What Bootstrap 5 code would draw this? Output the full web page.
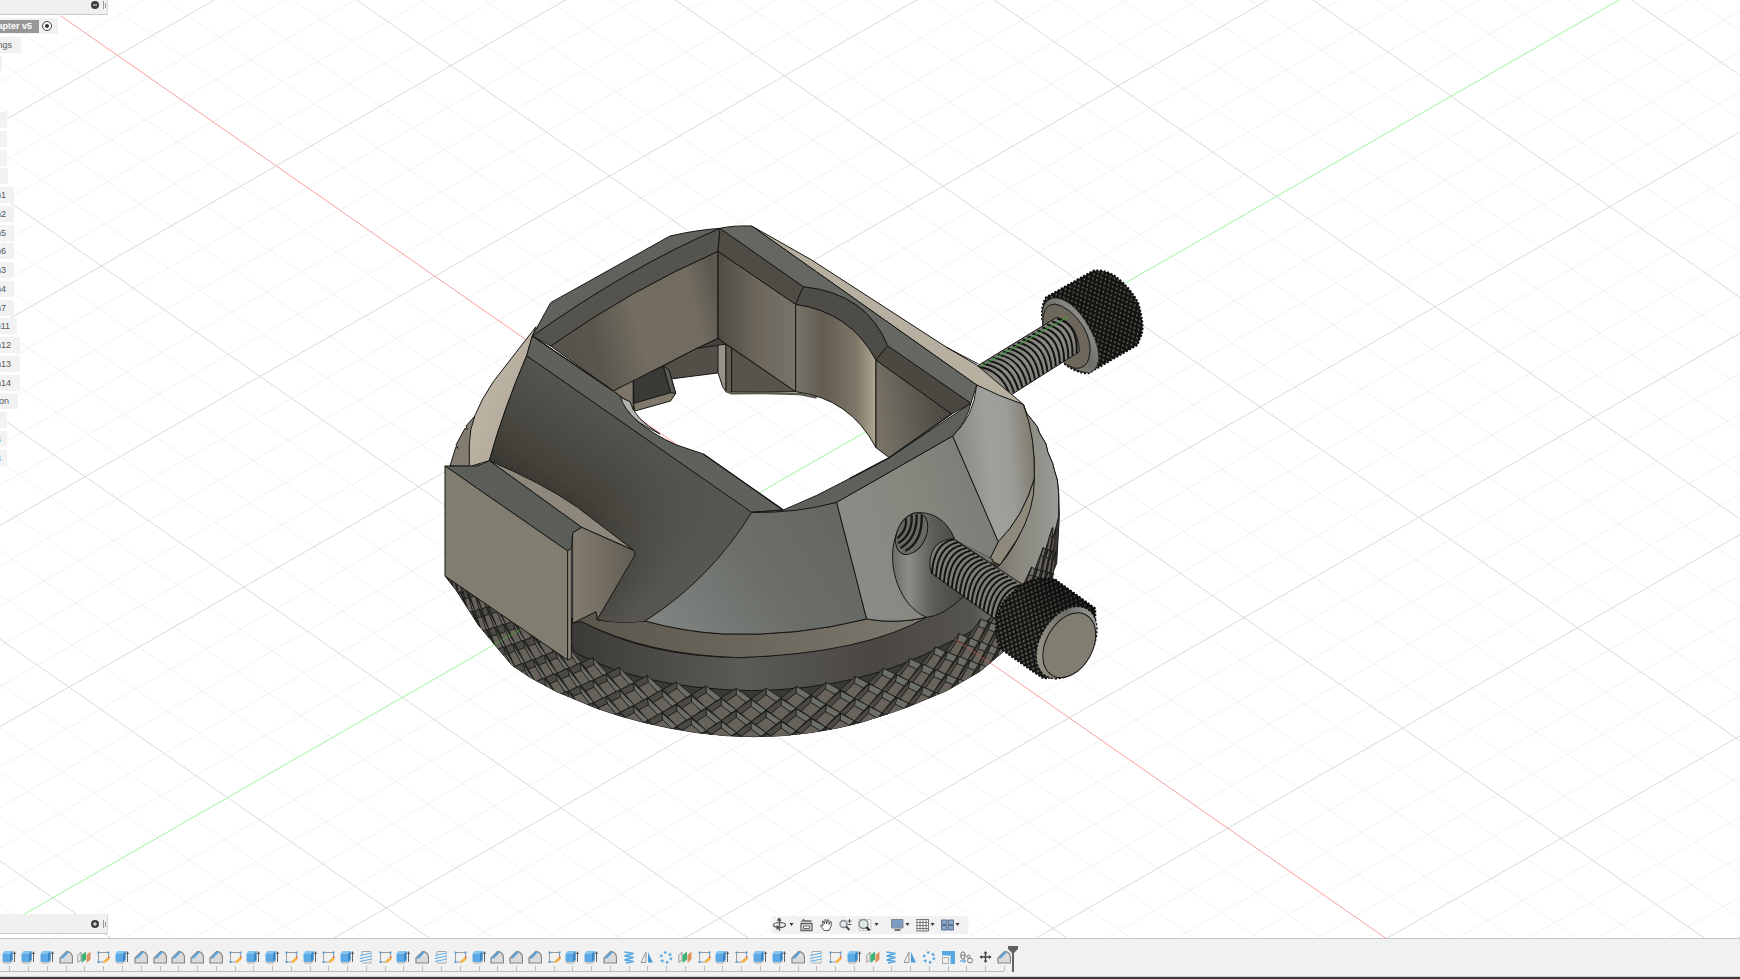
<!DOCTYPE html>
<html lang="en">
<head>
<meta charset="utf-8">
<meta name="viewport" content="width=device-width, initial-scale=1">
<title>Adapter v5</title>
<link href="https://cdn.jsdelivr.net/npm/bootstrap@5.3.0/dist/css/bootstrap.min.css" rel="stylesheet">
<style>
body{font-family:"Liberation Sans",Arial,sans-serif;font-size:9px;line-height:12px;color:#555;background:#fff}
button{border:0;background:none;padding:0;color:inherit;line-height:0}
.scene{inset:0;width:100%;height:100%}
.side{width:108px}
.panelbar{height:15px;background:#f0f0f0;border-bottom:1px solid #c9c9c9;border-right:1px solid #dcdcdc;gap:3px}
.panelbar.low{height:20px}
.tree{height:450px;margin-top:2px}
.tree li{flex:1 1 0;min-height:0}
.chip{height:16px;background:#f2f2f2;white-space:nowrap;padding-right:8px}
.w2{width:2px;padding:0}.w6{width:6px}.w7{width:7px;padding-right:6px}.w14{width:14px}.w17{width:17px;padding-right:7px}.w18{width:18px;padding-right:9px}.w20{width:20px;padding-right:9px}.w21{width:21px;padding-right:9px}
.w58{width:58px;padding-right:5px}
.current{width:39px;height:13px;background:#979797;color:#fff;padding-right:7px}
.blue{color:#5cabe8}
.viewbar{height:18px;width:197px;background:#f2f2f2;bottom:4px;padding:0 8px 0 1px}
.timeline{height:41px;background:#f1f1f1;border-top:1px solid #c6c6c6;border-bottom:2px solid #3b3a3d}
.track{width:1013px;padding-top:11px}
.track button{flex:1 1 0;height:21px;position:relative}
.track button::after{content:"";position:absolute;left:50%;bottom:0;width:1px;height:5px;background:#bbb}
.rail{width:1004px;height:1px;background:#bcbcbc}
.undertrack{height:1px;background:#cfcfcf;margin-top:4px}
.playhead{left:1007px;top:7px}
</style>
</head>
<body class="vh-100 d-flex flex-column overflow-hidden">

<svg width="0" height="0" class="position-absolute" aria-hidden="true">
 <symbol id="iE" viewBox="0 0 14 14"><path d="M.5 4 3 1H10.500V10L8 12H2L.5 11Z" fill="#5aa9e4"/><path d="M.5 4 3 1H10.500L8 4Z" fill="#83c3ee"/><path d="M8 4 10.500 1V10L8 12Z" fill="#3d86bf"/><path d="M1 11.500 2 13H8.500L11 11" fill="none" stroke="#aaa"/><path d="M12.500 12V2" stroke="#666"/><path d="M11 4 12.500 1 14 4Z" fill="#555"/></symbol>
 <symbol id="iF" viewBox="0 0 14 14"><path d="M1 13V8L7.500 1.500H9Q13.500 3 13.500 8V13Z" fill="#dadada" stroke="#858585" stroke-width="1.200"/><path d="M1.500 8.500 8 1.500H10.500L4 8.500Z" fill="#4fa3e3"/></symbol>
 <symbol id="iM" viewBox="0 0 14 14"><path d="M.8 12.500V5.500L4 2V10Z" fill="#eee" stroke="#999"/><path d="M4.500 13V5L9 1.500V9.500Z" fill="#3fb277"/><path d="M9.500 13V5L13.500 1.500V9.500Z" fill="#dd935f"/></symbol>
 <symbol id="iS" viewBox="0 0 14 14"><path d="M2.500 2.500H12.500M2.500 2.500V12M12.500 2.500V7M2.500 12H8" fill="none" stroke="#9b9b9b"/><path d="M1.500 1.500h2v2h-2zM11.500 1.500h2v2h-2zM1.500 11h2v2h-2z" fill="#4f9fe0"/><path d="M7.500 13 8 10.500 12 7 14 9 10 12.500Z" fill="#f4b548"/><path d="M11.500 7.500 13 6 14 8Z" fill="#e8514b"/></symbol>
 <symbol id="iT" viewBox="0 0 14 14"><path d="M3 1.500H12V13H3Z" fill="#f1f1f1" stroke="#aaa"/><path d="M1 6 13 3.500M1 9 13 6.500M1 12 13 9.500" stroke="#f1f1f1" stroke-width="2"/><path d="M1 5.500 13 3M1 8.500 13 6M1 11.500 13 9" stroke="#62ade4" stroke-width="1.200"/></symbol>
 <symbol id="iC" viewBox="0 0 14 14"><path d="M2.500 2 11.500 3.500 2.500 6 11.500 7.500 2.500 10 11.500 11.500 4 13" fill="none" stroke="#4fa3e3" stroke-width="1.500"/></symbol>
 <symbol id="iR" viewBox="0 0 14 14"><path d="M6 2V12.500H1Z" fill="#eee" stroke="#999"/><path d="M8 2V12.500H13Z" fill="#4b9edb"/></symbol>
 <symbol id="iP" viewBox="0 0 14 14"><circle cx="7" cy="7.500" r="5" fill="none" stroke="#62ade4" stroke-width="2.600" stroke-dasharray="2.500 2.740"/></symbol>
 <symbol id="iZ" viewBox="0 0 14 14"><path d="M1 1H14V14H9.500V5.500H1Z" fill="#59a8e2"/><path d="M1.500 7.500H7.500V13.500H1.500Z" fill="#eee" stroke="#aaa"/></symbol>
 <symbol id="iJ" viewBox="0 0 14 14"><g fill="#eee" stroke="#777"><path d="M2 3Q4 .5 6 3V7H2Z"/><circle cx="4" cy="7" r="2"/><circle cx="11" cy="10.500" r="2.500"/><circle cx="9.500" cy="6.500" r="1.500"/></g><path d="M1 11H6M4.500 9 6.500 11 4.500 13" fill="none" stroke="#3b8dd3"/></symbol>
 <symbol id="iV" viewBox="0 0 14 14"><path d="M7.500 2V12M2.500 7H12.500" stroke="#444" stroke-width="1.400"/><path d="M7.500 1 9.500 3.500H5.500ZM7.500 13 9.500 10.500H5.500ZM1.500 7 4 5V9ZM13.500 7 11 5V9Z" fill="#444"/></symbol>
</svg>

<main class="flex-grow-1 position-relative overflow-hidden">
 <svg class="scene position-absolute" viewBox="0 0 1740 938" preserveAspectRatio="xMidYMid slice" role="img" aria-label="Adapter model">
  <defs>
   <linearGradient id="gSkirt" gradientUnits="userSpaceOnUse" x1="425" y1="0" x2="1890" y2="0"><stop offset="0" stop-color="#3b3a37"/><stop offset=".35" stop-color="#5b5a57"/><stop offset=".62" stop-color="#4a4743"/><stop offset=".82" stop-color="#55534e"/><stop offset=".9" stop-color="#858378"/><stop offset="1" stop-color="#9b9c98"/></linearGradient>
   <linearGradient id="gBand" x1="0" x2="1" y1="0" y2="0"><stop offset="0" stop-color="#5b554b"/><stop offset=".45" stop-color="#6a655a"/><stop offset="1" stop-color="#7e796e"/></linearGradient>
   <linearGradient id="gDark" gradientUnits="userSpaceOnUse" x1="380" y1="980" x2="620" y2="620"><stop offset="0" stop-color="#2b2a27"/><stop offset=".35" stop-color="#434139"/><stop offset=".7" stop-color="#4e4d48"/><stop offset="1" stop-color="#575650"/></linearGradient>
   <linearGradient id="gDark2" gradientUnits="userSpaceOnUse" x1="520" y1="850" x2="760" y2="1060"><stop offset="0" stop-color="#55544f" stop-opacity="0"/><stop offset="1" stop-color="#575650"/></linearGradient>
   <linearGradient id="gFront" x1="0" x2="1" y1=".7" y2=".3"><stop offset="0" stop-color="#7f8380"/><stop offset=".5" stop-color="#6b6e69"/><stop offset="1" stop-color="#646661"/></linearGradient>
   <linearGradient id="gMid" x1="0" x2="1" y1=".6" y2=".3"><stop offset="0" stop-color="#8b8c88"/><stop offset=".5" stop-color="#87877f"/><stop offset="1" stop-color="#7a7b76"/></linearGradient>
   <linearGradient id="gRight" x1="0" x2="1" y1=".5" y2=".35"><stop offset="0" stop-color="#858681"/><stop offset=".45" stop-color="#a0a19d"/><stop offset=".7" stop-color="#9b9b97"/><stop offset="1" stop-color="#7d796b"/></linearGradient>
   <linearGradient id="gLight" x1="0" x2="1" y1="0" y2="1"><stop offset="0" stop-color="#c4bdae"/><stop offset=".6" stop-color="#b5ac9d"/><stop offset="1" stop-color="#8e887b"/></linearGradient>
   <linearGradient id="gWall" x1="0" x2="1" y1=".5" y2=".3"><stop offset="0" stop-color="#57524a"/><stop offset=".22" stop-color="#5a554c"/><stop offset=".5" stop-color="#736d61"/><stop offset=".85" stop-color="#716b60"/><stop offset="1" stop-color="#5d584e"/></linearGradient>
   <linearGradient id="gWall2" x1="0" x2="1" y1="0" y2="0"><stop offset="0" stop-color="#4f4b44"/><stop offset=".5" stop-color="#6c665b"/><stop offset="1" stop-color="#78736a"/></linearGradient>
   <linearGradient id="gCurve" x1="0" x2="1" y1="0" y2="0"><stop offset="0" stop-color="#78736a"/><stop offset=".35" stop-color="#625c51"/><stop offset=".75" stop-color="#7e7768"/><stop offset="1" stop-color="#b0a793"/></linearGradient>
   <linearGradient id="gWall3" x1="0" x2="1" y1=".7" y2=".5"><stop offset="0" stop-color="#7a7468"/><stop offset="1" stop-color="#48443d"/></linearGradient>
   <linearGradient id="gBore" x1="0" x2="1" y1="0" y2="0"><stop offset="0" stop-color="#6d6b66"/><stop offset=".16" stop-color="#8d8d88"/><stop offset=".4" stop-color="#5d5c58"/><stop offset=".7" stop-color="#484743"/><stop offset="1" stop-color="#64635f"/></linearGradient>
   <linearGradient id="gSide" x1="0" x2="1" y1="0" y2="0"><stop offset="0" stop-color="#837c70"/><stop offset="1" stop-color="#625d53"/></linearGradient>
   <linearGradient id="gShaft" x1="0" x2="1" y1="0" y2="1"><stop offset="0" stop-color="#4f4f4c"/><stop offset=".5" stop-color="#8c8b86"/><stop offset="1" stop-color="#6f6d66"/></linearGradient>
   <linearGradient id="gRing" x1="0" x2="1" y1="1" y2="0"><stop offset="0" stop-color="#aaa595"/><stop offset=".5" stop-color="#6d6d69"/><stop offset="1" stop-color="#b5b5b0"/></linearGradient>
   <linearGradient id="gKnob" x1="0" x2="1" y1="1" y2="0"><stop offset="0" stop-opacity=".05"/><stop offset=".5" stop-opacity=".1"/><stop offset="1" stop-opacity=".65"/></linearGradient>
   <pattern id="knurlA" width="16" height="20" patternUnits="userSpaceOnUse" patternTransform="rotate(28)"><path d="M0 0H16V20H0Z" fill="#141413"/><path d="M4 0 8 5 4 10 0 5ZM12 10 16 15 12 20 8 15Z" fill="#68655e"/></pattern>
   <pattern id="knurlB" width="16" height="20" patternUnits="userSpaceOnUse" patternTransform="rotate(-28)"><path d="M0 0H16V20H0Z" fill="#121211"/><path d="M4 1 7 5 4 9 1 5ZM12 11 15 15 12 19 9 15Z" fill="#69665e"/></pattern>
   <clipPath id="ringClip"><path d="M30 900 45 1098 78 1140 145 1245 245 1365 300 1402 380 1445 500 1495Q640 1545 800 1568 890 1580 970 1580 1060 1580 1140 1568 1230 1555 1300 1535 1380 1513 1430 1492L1550 1442 1650 1384 1720 1325 1820 1215 1892 1060V850H1500L967 1340 500 1200Z"/></clipPath>
  </defs>
  <g id="grid"></g>

  <!-- model, drawn at three units to the pixel -->
  <g transform="translate(430 210) scale(.33333)" stroke="#161614" stroke-width="3" stroke-linejoin="round">
   <!-- rear screw -->
   <path d="M1837 330Q1832 290 1848 262L1990 182Q2020 178 2050 195 2100 230 2125 280 2142 340 2136 370L2122 405 1975 490Q1935 488 1905 462Z" fill="url(#knurlB)" stroke="#0c0c0b" stroke-width="6" stroke-dasharray="6 5"/>
   <path d="M1838 345Q1830 275 1868 265 1915 262 1960 325 2010 400 2005 450 2000 485 1975 488 1930 480 1905 462Z" fill="url(#gRing)" stroke="#333" stroke-dasharray="7 5"/>
   <path d="M1838 345Q1836 282 1875 282 1920 290 1960 350 1988 400 1978 440 1970 478 1935 475L1905 462Z" fill="#6d675c"/>
   <path d="M1625 478 1880 322Q1945 340 1948 425L1735 560Z" fill="url(#gShaft)"/>
   <g id="threadsB" fill="none"></g>
   <path d="M1650 470 1915 320" stroke="#2fa52f"/>

   <!-- ring, skirt and knurling -->
   <path d="M60 768 78 710 85 715 78 705 105 655 112 658 108 648 140 612 150 770Z" fill="#827d70"/>
   <path d="M1780 583 1790 610 1822 650 1828 668 1848 702 1853 725 1868 760 1873 780 1882 810 1886 850 1888 920 1880 1060 1820 1200 1720 1325 1650 1384 1550 1442 1430 1492 1300 1535Q1230 1555 1140 1568 1060 1580 970 1580 890 1580 800 1568 640 1545 500 1495L380 1445 300 1402 245 1365 145 1245 78 1140 45 1098 425 1225 1600 1160 1705 995Z" fill="#3b3935"/>
   <path d="M425 1225 455 1235Q650 1340 930 1343 1300 1330 1600 1160L1710 1065Q1800 960 1813 805 1818 700 1780 583L1790 610 1822 650 1828 668 1848 702 1853 725 1868 760 1873 780 1882 810 1886 850 1886 920Q1870 1010 1800 1100 1700 1240 1550 1300 1300 1440 960 1442 640 1435 440 1330Q425 1318 425 1300Z" fill="url(#gSkirt)"/>
   <g clip-path="url(#ringClip)"><g id="ringKnurl" stroke-width="2"></g></g>
   <path d="M425 1240 498 1205 502 1230Q570 1240 645 1233 760 1265 880 1272 1100 1280 1310 1227 1400 1243 1490 1222 1300 1330 930 1343 650 1335 455 1235Z" fill="url(#gBand)"/>
   <path d="M1813 805Q1815 900 1760 990L1710 1065 1678 1050 1705 995Q1780 920 1813 805Z" fill="#8f897b"/>

   <!-- outer shell -->
   <path d="M307 378 318 350 190 515Q118 620 118 700V770L178 752Q220 600 290 437Z" fill="url(#gLight)"/>
   <path d="M965 48 1145 150 1550 412 1640 465 1780 583Q1700 560 1640 525Z" fill="#b7af9f"/>
   <path d="M1550 412 1645 462" fill="none"/>
   <path d="M290 437 965 907Q840 1110 645 1233 560 1242 502 1228L610 1020 178 752Q220 600 290 437Z" fill="url(#gDark)"/>
   <path d="M290 437 965 907Q840 1110 645 1233 560 1242 502 1228L610 1020 178 752Q220 600 290 437Z" fill="url(#gDark2)" stroke="none"/>
   <path d="M965 907Q1100 905 1220 877L1310 1227Q1100 1280 880 1272 760 1265 645 1233 840 1110 965 907Z" fill="url(#gFront)"/>
   <path d="M1220 877 1568 678 1705 995 1678 1050 1600 1160Q1540 1205 1490 1222 1400 1243 1310 1227Z" fill="url(#gMid)"/>
   <path d="M1640 525Q1710 560 1780 583 1817 680 1813 805 1780 920 1705 995L1568 678Q1632 620 1640 525Z" fill="url(#gRight)"/>

   <!-- opening walls -->
   <path d="M700 468 800 415 864 385 870 488 722 507Z" fill="#534f48"/>
   <path d="M800 415 864 385 888 403Z" fill="#45423d"/>
   <path d="M550 543 610 508V600L590 572Z" fill="#7d7668"/>
   <path d="M610 508 700 468 717 480 737 550 722 573 615 603 610 580Z" fill="#80796c"/>
   <path d="M610 508 700 468 722 548 612 580Z" fill="#393a36"/>
   <path d="M700 468 717 480 737 550 722 548Z" fill="#5b5a54"/>
   <path d="M864 405 888 403V545L878 530 864 488Z" fill="#969285"/>
   <path d="M888 403 905 415V548L888 543Z" fill="#605b51"/>
   <path d="M905 415 1097 545 905 546Z" fill="#59544a"/>
   <path d="M886 543 905 550 1000 549 1110 552 1160 563" fill="none" stroke="#5d584e" stroke-width="7"/>
   <path d="M362 408Q600 240 864 124V385L800 415 550 543Z" fill="url(#gWall)"/>
   <path d="M864 124 1097 283V545L864 385Z" fill="url(#gWall2)"/>
   <path d="M1097 283Q1260 305 1338 450V713Q1260 565 1097 545Z" fill="url(#gCurve)"/>
   <path d="M1338 450 1565 612 1378 743 1338 713Z" fill="url(#gWall3)"/>
   <path d="M307 378Q600 170 870 55L864 124Q600 240 362 408Z" fill="#55534e"/>
   <path d="M870 55 1120 230 1097 283 864 124Z" fill="#4f4c46"/>
   <path d="M1120 230Q1310 250 1373 407L1338 450Q1260 305 1097 283Z" fill="#4d4c47"/>
   <path d="M1373 407 1623 580 1565 612 1338 450Z" fill="#4b4842"/>
   <path d="M562 558 600 575Q612 625 690 672 620 640 585 600Z" fill="#b3b3b1"/>

   <!-- rim -->
   <path d="M307 378 362 278 720 78Q800 60 870 55 600 170 307 378Z" fill="#5f625d"/>
   <path d="M870 55Q910 46 965 48L1640 525 1623 580 1373 407Q1310 250 1120 230Z" fill="#656862"/>
   <path d="M307 378 550 543 570 558Q595 640 740 705L820 732 1060 900 965 907 290 437Z" fill="#5f625c"/>
   <path d="M965 907 1060 900Q1160 860 1260 805L1378 743 1623 580Q1610 635 1568 678L1220 877Q1100 910 965 907Z" fill="#5d605b"/>
   <path d="M307 378 550 543M820 732 1060 900M1565 612 1378 743 1260 805" fill="none" stroke-width="4"/>

   <!-- clamp block -->
   <path d="M178 752Q330 815 440 890L610 1020 455 952Z" fill="#8d887b"/>
   <path d="M428 968 455 952 612 1022 615 1035 502 1228 498 1205 428 1240Z" fill="url(#gSide)"/>
   <path d="M45 768 142 768 178 752 455 952 428 968 424 1015 413 1023Z" fill="#5b5d58"/>
   <path d="M45 768 413 1023V1350L45 1098Z" fill="#817d71"/>
   <path d="M413 1023 424 1015V1345L413 1350Z" fill="#8e897c"/>

   <!-- bore and front screw -->
   <path d="M1475 908C1530 912 1560 950 1575 990L1690 1050 1600 1160Q1540 1218 1490 1222C1410 1190 1370 1070 1395 985 1410 930 1445 906 1475 908Z" fill="url(#gBore)"/>
   <path d="M1572 986 1690 1060 1680 1045Z" fill="#7a7b76" stroke="none"/>
   <ellipse cx="1445" cy="971" rx="43" ry="66" transform="rotate(26 1445 971)" fill="#6b6964"/>
   <g fill="none" stroke="#191917" stroke-width="7"><path d="M1402 985Q1432 960 1428 925M1404 1000Q1448 975 1445 915M1412 1014Q1462 985 1460 913M1426 1023Q1478 995 1475 915"/></g>
   <path d="M1570 987 1780 1125 1700 1230 1505 1090Q1490 1050 1515 1010 1540 985 1570 987Z" fill="#7d7b75"/>
   <g id="threadsA" fill="none"></g>
   <path d="M1700 1235Q1705 1180 1750 1145 1800 1095 1875 1108L1995 1195Q2002 1270 1960 1340 1900 1405 1840 1405L1810 1385 1710 1315Q1694 1280 1700 1235Z" fill="url(#knurlA)" stroke="#0c0c0b" stroke-width="6" stroke-dasharray="6 5"/>
   <path d="M1700 1235Q1705 1180 1750 1145 1800 1095 1875 1108L1995 1195Q2002 1270 1960 1340 1900 1405 1840 1405L1810 1385 1710 1315Q1694 1280 1700 1235Z" fill="url(#gKnob)" stroke="none"/>
   <ellipse cx="1910" cy="1298" rx="78" ry="118" transform="rotate(32 1910 1298)" fill="url(#gRing)" stroke-dasharray="7 5" stroke-width="4"/>
   <ellipse cx="1918" cy="1306" rx="70" ry="104" transform="rotate(29 1918 1306)" fill="#827d71"/>
  </g>
  <path d="M955 639 991 664" stroke="#d0504e" stroke-opacity=".6"/>
  <path d="M493 645 520 630" stroke="#3fae3f" stroke-opacity=".7"/>
 </svg>

 <aside class="side position-absolute top-0 start-0 bottom-0 d-flex flex-column">
  <div class="panelbar d-flex align-items-start justify-content-end">
   <button aria-label="Collapse browser"><svg width="10" height="10" viewBox="0 0 10 10"><circle cx="5" cy="5" r="4" fill="#3c3c3c"/><path d="M3 5H7" stroke="#fff"/></svg></button>
   <svg width="4" height="10"><path d="M.5 1V9M2.500 3V8" stroke="#999"/></svg>
  </div>
  <ul class="tree list-unstyled d-flex flex-column mb-0" id="tree"></ul>
  <div class="panelbar low mt-auto mb-1 d-flex align-items-center justify-content-end">
   <button aria-label="Expand comments"><svg width="10" height="10" viewBox="0 0 10 10"><circle cx="5" cy="5" r="4" fill="#3c3c3c"/><path d="M3 5H7M5 3V7" stroke="#fff"/></svg></button>
   <svg width="4" height="10"><path d="M.5 1V9M2.500 3V8" stroke="#999"/></svg>
  </div>
 </aside>

 <nav class="viewbar position-absolute start-50 translate-middle-x d-flex align-items-center justify-content-between" aria-label="View">
  <button aria-label="Orbit"><svg width="22" height="14" viewBox="0 0 22 14"><path d="M7 1V13" stroke="#666" stroke-width="1.500"/><ellipse cx="7" cy="7" rx="6" ry="2.500" fill="none" stroke="#555" stroke-width="1.200"/><path d="M5 1 7 -1 9 3H5ZM4 7 8 9.500 4 12Z" fill="#555"/><path d="M17 5H21L19 8Z" fill="#333"/></svg></button>
  <button aria-label="Look at"><svg width="14" height="14" viewBox="0 0 14 14"><path d="M1.500 5.500H12.500V12.500H1.500ZM2 4 4 1.500 5 3H12" fill="#ddd" stroke="#666" stroke-width="1.300"/><path d="M4 8H10V10.500H4Z" fill="#fff" stroke="#666"/></svg></button>
  <button aria-label="Pan"><svg width="14" height="14" viewBox="0 0 14 14"><path d="M4.500 12.500 1 7.500Q1.500 6 3.500 8L3 3Q4 2 5 6L5.500 1.500Q7 .5 7 6L8.500 1.500Q10 1 9.500 6.500L11 3.500Q12.500 3 11.500 8L9.500 12.500Z" fill="#fff" stroke="#555"/></svg></button>
  <button aria-label="Zoom"><svg width="14" height="14" viewBox="0 0 14 14"><circle cx="5" cy="6" r="3.500" fill="#dfe9ee" stroke="#888" stroke-width="1.300"/><path d="M7.500 8.500 11 12" stroke="#444" stroke-width="2"/><path d="M9 3H13M11 1V5M9 6.500H13" stroke="#555"/></svg></button>
  <button aria-label="Fit"><svg width="22" height="14" viewBox="0 0 22 14"><path d="M1.500 1.500H13.500V12.500H1.500Z" fill="none" stroke="#bbb" stroke-dasharray="2 1"/><circle cx="6" cy="6" r="4.500" fill="#dfeae6" stroke="#888" stroke-width="1.300"/><path d="M9 9 12 12.500" stroke="#333" stroke-width="2.400"/><path d="M17 5H21L19 8Z" fill="#333"/></svg></button>
  <span></span>
  <button aria-label="Display settings"><svg width="20" height="14" viewBox="0 0 20 14"><path d="M1 1.500H12.500V10H1Z" fill="#7c9cc8" stroke="#888"/><path d="M4 12H10" stroke="#777" stroke-width="2"/><path d="M15 5H19L17 8Z" fill="#333"/></svg></button>
  <button aria-label="Grid and snaps"><svg width="20" height="14" viewBox="0 0 20 14"><path d="M1 1H13V13H1Z" fill="#fff"/><path d="M1 1.500H13M1 4.500H13M1 7.500H13M1 10.500H13M1 13H13M1.500 1V13M4.500 1V13M7.500 1V13M10.500 1V13M13 1V13" stroke="#777"/><path d="M15 5H19L17 8Z" fill="#333"/></svg></button>
  <button aria-label="Viewports"><svg width="20" height="14" viewBox="0 0 20 14"><path d="M1 2H6.500V6.500H1ZM7.500 2H13V6.500H7.500ZM1 7.500H6.500V12H1ZM7.500 7.500H13V12H7.500Z" fill="#8aa6cd" stroke="#5c6f8d"/><path d="M15 5H19L17 8Z" fill="#333"/></svg></button>
 </nav>
</main>

<footer class="timeline position-relative flex-shrink-0">
 <div class="track d-flex" id="track"></div>
 <div class="rail"></div>
 <div class="undertrack"></div>
 <svg class="playhead position-absolute" width="12" height="26" viewBox="0 0 12 26"><path d="M1 0H11V3L7 7V26H5V7L1 3Z" fill="#616161"/></svg>
</footer>

<script src="https://cdn.jsdelivr.net/npm/bootstrap@5.3.0/dist/js/bootstrap.bundle.min.js"></script>
<script>
const $ = id => document.getElementById(id);

// ground grid: an affine lattice, five minor cells to each major one
const O = [752, 497], U = [158.6, 110.4], V = [174.8, -100.2];
const at = (a, b) => [O[0] + a * U[0] + b * V[0], O[1] + a * U[1] + b * V[1]].map(n => n.toFixed(1)).join(' ');
let minor = '', major = '';
for (let i = -50; i <= 50; i++) {
  const k = i / 5, d = `M${at(k, -12)}L${at(k, 12)}M${at(-12, k)}L${at(12, k)}`;
  if (i === 0) continue;
  if (i % 5) minor += d; else major += d;
}
$('grid').innerHTML = `<g fill="none"><path d="${minor}" stroke="#f2f2f2"/><path d="${major}" stroke="#d9d9d9"/>
 <path d="M${at(-4.36, 0)}L${at(12, 0)}" stroke="#ff9c9c"/><path d="M${at(0, -12)}L${at(0, 12)}" stroke="#9cf59c"/></g>`;

// knurled ring: pyramids wrapped round a cylinder
const pt = (t, h, r = 1) => `${(967 + 922 * r * Math.sin(t)).toFixed(0)} ${(795 + h + 640 * r * Math.cos(t)).toFixed(0)}`;
const step = 0.0976, half = step / 2;
let knurl = '';
for (let j = 0; j < 5; j++) for (let k = -14; k <= 13; k++) {
  const t = (k + (j % 2) / 2) * step + 0.045, h = 32 + j * 34;
  const T = pt(t, h - 38, 1.01), L = pt(t - half, h), R = pt(t + half, h), B = pt(t, h + 34);
  const C = pt(t, h - 12), l = pt(t - half * .65, h + 10), r = pt(t + half * .65, h + 10);
  knurl += `<path d="M${L}L${T}L${R}L${B}Z" fill="#3d3b37"/><path d="M${T}L${R}L${r}L${C}Z" fill="#6c6e69"/><path d="M${T}L${L}L${l}L${C}Z" fill="#4a4945"/><path d="M${C}L${r}L${B}L${l}Z" fill="#67625a"/>`;
}
$('ringKnurl').innerHTML = knurl;

// screw threads
let a = '', b = '';
for (let i = 0; i < 17; i++) {
  const x = 12.5 * i, y = 8.6 * i;
  a += `<path d="M${1572 + x} ${988 + y}Q${1510 + x} ${1000 + y} ${1506 + x * .95} ${1092 + y}" stroke="#131312" stroke-width="6"/>`;
  b += `<path d="M${1645 + x * 1.18} ${470 - y * 1.05}Q${1715 + x * 1.15} ${480 - y} ${1740 + x} ${556 - y * .92}" stroke="#131312" stroke-width="6"/>`;
}
$('threadsA').innerHTML = a;
$('threadsB').innerHTML = b;

// browser tree: [visible text, chip class]
const rows = [null, ['ngs', 'w21'], ['', 'w2'], 0, 0, ['', 'w7'], ['', 'w7'], ['', 'w7'], ['', 'w6'], ['n1', 'w14'], ['n2', 'w14'], ['n5', 'w14'], ['n6', 'w14'], ['n3', 'w14'], ['n4', 'w14'], ['n7', 'w14'], ['n11', 'w17'], ['n12', 'w20'], ['n13', 'w20'], ['n14', 'w20'], ['on', 'w18'], ['', 'w7'], ['s', 'w7 blue'], ['s', 'w7 blue']];
$('tree').innerHTML = rows.map((r, i) => {
  if (i === 0) return `<li class="d-flex align-items-center"><div class="chip w58 d-flex align-items-center justify-content-between"><b class="current d-flex align-items-center justify-content-end">apter v5</b><button aria-label="Activate"><svg width="12" height="12" viewBox="0 0 12 12"><circle cx="6" cy="6" r="4.500" fill="#fff" stroke="#444"/><circle cx="6" cy="6" r="2" fill="#333"/></svg></button></div></li>`;
  return `<li class="d-flex align-items-center">${r ? `<div class="chip ${r[1]} d-flex align-items-center justify-content-end">${r[0]}</div>` : ''}</li>`;
}).join('');

// design history
const names = {E: 'Extrude', F: 'Fillet', M: 'Plane', S: 'Sketch', T: 'Thread', C: 'Coil', R: 'Mirror', P: 'Pattern', Z: 'Scale', J: 'Joint', V: 'Move'};
$('track').innerHTML = [...'EEEFMSEFFFFFSEESESETSEFTSEFFFSEEFCRPMSESEEFTSEMCRPZJVF'].map(c =>
  `<button class="d-flex justify-content-center align-items-start" aria-label="${names[c]}"><svg width="14" height="14"><use href="#i${c}"/></svg></button>`).join('');
</script>
</body>
</html>
